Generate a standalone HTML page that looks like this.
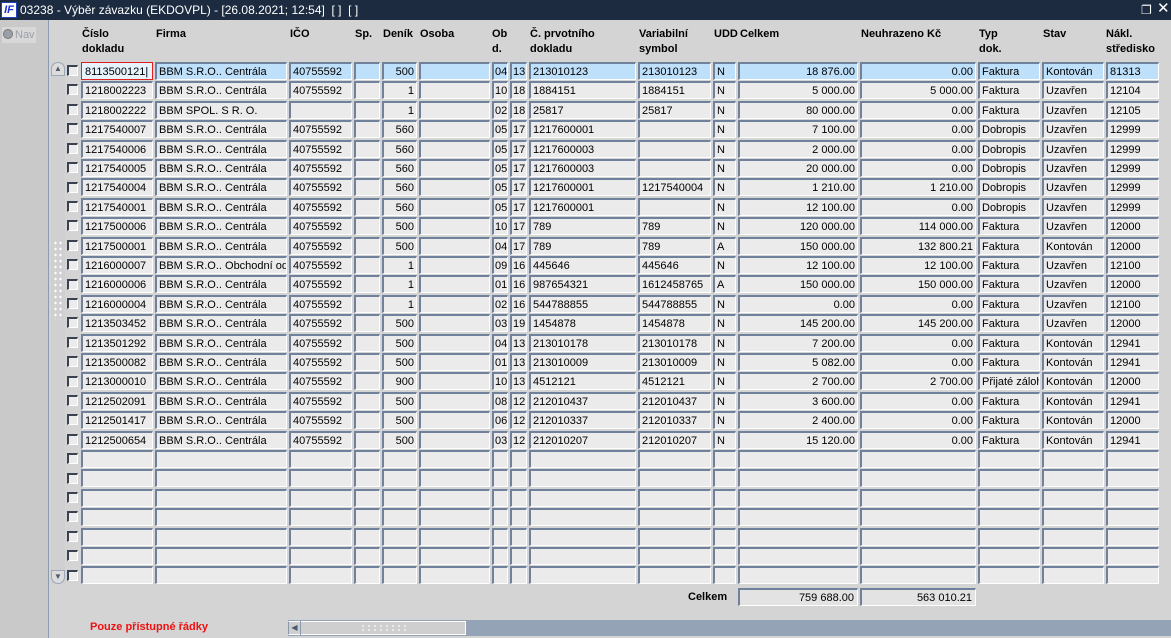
<!DOCTYPE html>
<html><head><meta charset="utf-8"><style>
*{margin:0;padding:0;box-sizing:border-box}
body{width:1171px;height:638px;overflow:hidden;background:#d4d4d4;font-family:"Liberation Sans",Arial,sans-serif;font-size:11px;color:#000;position:relative}
#tb{position:absolute;left:0;top:0;width:1171px;height:20px;background:#1c2b40;color:#fff;font-size:12px;line-height:20px}
#logo{position:absolute;left:1px;top:2px;width:16px;height:16px;background:#fff;border:1px solid #2040c0;color:#1a2fd0;font-weight:bold;font-style:italic;font-size:11px;line-height:14px;text-align:center}
#left{position:absolute;left:0;top:20px;width:49px;height:618px;background:#c9c9c9;border-right:1px solid #8d9bb0}
.hd{position:absolute;top:27px;font-weight:bold;line-height:15px}
.row{position:absolute;left:81px;display:flex;gap:2px;height:18px}
.row i{display:block;font-style:normal;height:18px;background:#ebebeb;border-top:2px solid #6f819b;border-left:2px solid #6f819b;border-right:1px solid #fff;border-bottom:1px solid #fff;padding:1px 2px 0;line-height:15px;white-space:nowrap;overflow:hidden}
.row i:nth-child(1){width:72px}.row i:nth-child(2){width:132px}.row i:nth-child(3){width:63px}.row i:nth-child(4){width:26px}
.row i:nth-child(5){width:35px;text-align:right}.row i:nth-child(6){width:71px}.row i:nth-child(7){width:16px;padding:1px 1px 0}.row i:nth-child(8){width:17px;padding:1px 1px 0}
.row i:nth-child(9){width:107px}.row i:nth-child(10){width:73px}.row i:nth-child(11){width:23px}.row i:nth-child(12){width:120px;text-align:right}
.row i:nth-child(13){width:116px;text-align:right}.row i:nth-child(14){width:62px}.row i:nth-child(15){width:62px}.row i:nth-child(16){width:53px}
.sel i{background:#bfe0fb}
.cb{position:absolute;left:67px;width:11px;height:11px;background:#ececec;border-top:2px solid #3a4250;border-left:2px solid #3a4250;border-right:1px solid #fff;border-bottom:1px solid #fff}
.ft{position:absolute;top:588px;height:18px;background:#e3e3e3;border-top:2px solid #6f819b;border-left:2px solid #6f819b;border-right:1px solid #fff;border-bottom:1px solid #fff;text-align:right;padding:1px 3px 0 0;line-height:15px}
</style></head><body>
<div id="tb"><div id="logo">IF</div><span style="position:absolute;left:20px">03238 - Výběr závazku (EKDOVPL) - [26.08.2021; 12:54]&nbsp; [ ]&nbsp; [ ]</span>
<span style="position:absolute;left:1141px;top:0;font-size:12px">&#x2750;</span><span style="position:absolute;left:1157px;top:-1px;font-size:15px">✕</span></div>
<div id="left"><div style="position:absolute;left:2px;top:7px;width:34px;height:16px;background:#d8d8d8;color:#9aa0a8;font-size:11px;line-height:16px"><span style="display:inline-block;width:10px;height:10px;border-radius:50%;background:#9aa0a8;border:1px solid #777;margin:0 2px 0 1px;vertical-align:-1px"></span>Nav</div></div>
<div class="hd" style="left:82px">Číslo<br>dokladu</div>
<div class="hd" style="left:156px">Firma</div>
<div class="hd" style="left:290px">IČO</div>
<div class="hd" style="left:355px">Sp.</div>
<div class="hd" style="left:383px">Deník</div>
<div class="hd" style="left:420px">Osoba</div>
<div class="hd" style="left:492px">Ob<br>d.</div>
<div class="hd" style="left:530px">Č. prvotního<br>dokladu</div>
<div class="hd" style="left:639px">Variabilní<br>symbol</div>
<div class="hd" style="left:714px">UDD</div>
<div class="hd" style="left:740px">Celkem</div>
<div class="hd" style="left:861px">Neuhrazeno Kč</div>
<div class="hd" style="left:979px">Typ<br>dok.</div>
<div class="hd" style="left:1043px">Stav</div>
<div class="hd" style="left:1106px;white-space:nowrap">Nákl.<br>středisko</div>
<div style="position:absolute;left:51px;top:62px;width:14px;height:522px;background:#d0d0d0"></div>
<div style="position:absolute;left:51px;top:62px;width:14px;height:14px;border:1px solid #9aa8ba;border-radius:7px 7px 0 0;background:#dcdcdc;text-align:center;font-size:8px;line-height:12px;color:#4a5a70">▲</div>
<div style="position:absolute;left:51px;top:570px;width:14px;height:14px;border:1px solid #9aa8ba;border-radius:0 0 7px 7px;background:#dcdcdc;text-align:center;font-size:8px;line-height:12px;color:#4a5a70">▼</div>
<div style="position:absolute;left:53px;top:240px;width:10px;height:80px;background-image:radial-gradient(#fff 1px,transparent 1.2px);background-size:5px 6px"></div>
<div class="cb" style="top:65px"></div><div class="cb" style="top:84px"></div><div class="cb" style="top:104px"></div><div class="cb" style="top:123px"></div><div class="cb" style="top:143px"></div><div class="cb" style="top:162px"></div><div class="cb" style="top:182px"></div><div class="cb" style="top:201px"></div><div class="cb" style="top:220px"></div><div class="cb" style="top:240px"></div><div class="cb" style="top:259px"></div><div class="cb" style="top:279px"></div><div class="cb" style="top:298px"></div><div class="cb" style="top:317px"></div><div class="cb" style="top:337px"></div><div class="cb" style="top:356px"></div><div class="cb" style="top:376px"></div><div class="cb" style="top:395px"></div><div class="cb" style="top:414px"></div><div class="cb" style="top:434px"></div><div class="cb" style="top:453px"></div><div class="cb" style="top:473px"></div><div class="cb" style="top:492px"></div><div class="cb" style="top:511px"></div><div class="cb" style="top:531px"></div><div class="cb" style="top:550px"></div><div class="cb" style="top:570px"></div>
<div class="row sel" style="top:62px"><i style="background:#e6f2fc;border:1px solid #e02020;padding:2px 3px 0">8113500121|</i><i>BBM S.R.O.. Centrála</i><i>40755592</i><i></i><i>500</i><i></i><i>04</i><i>13</i><i>213010123</i><i>213010123</i><i>N</i><i>18 876.00</i><i>0.00</i><i>Faktura</i><i>Kontován</i><i>81313</i></div>
<div class="row" style="top:81.4px"><i>1218002223</i><i>BBM S.R.O.. Centrála</i><i>40755592</i><i></i><i>1</i><i></i><i>10</i><i>18</i><i>1884151</i><i>1884151</i><i>N</i><i>5 000.00</i><i>5 000.00</i><i>Faktura</i><i>Uzavřen</i><i>12104</i></div>
<div class="row" style="top:100.8px"><i>1218002222</i><i>BBM SPOL. S R. O.</i><i></i><i></i><i>1</i><i></i><i>02</i><i>18</i><i>25817</i><i>25817</i><i>N</i><i>80 000.00</i><i>0.00</i><i>Faktura</i><i>Uzavřen</i><i>12105</i></div>
<div class="row" style="top:120.2px"><i>1217540007</i><i>BBM S.R.O.. Centrála</i><i>40755592</i><i></i><i>560</i><i></i><i>05</i><i>17</i><i>1217600001</i><i></i><i>N</i><i>7 100.00</i><i>0.00</i><i>Dobropis</i><i>Uzavřen</i><i>12999</i></div>
<div class="row" style="top:139.6px"><i>1217540006</i><i>BBM S.R.O.. Centrála</i><i>40755592</i><i></i><i>560</i><i></i><i>05</i><i>17</i><i>1217600003</i><i></i><i>N</i><i>2 000.00</i><i>0.00</i><i>Dobropis</i><i>Uzavřen</i><i>12999</i></div>
<div class="row" style="top:159px"><i>1217540005</i><i>BBM S.R.O.. Centrála</i><i>40755592</i><i></i><i>560</i><i></i><i>05</i><i>17</i><i>1217600003</i><i></i><i>N</i><i>20 000.00</i><i>0.00</i><i>Dobropis</i><i>Uzavřen</i><i>12999</i></div>
<div class="row" style="top:178.4px"><i>1217540004</i><i>BBM S.R.O.. Centrála</i><i>40755592</i><i></i><i>560</i><i></i><i>05</i><i>17</i><i>1217600001</i><i>1217540004</i><i>N</i><i>1 210.00</i><i>1 210.00</i><i>Dobropis</i><i>Uzavřen</i><i>12999</i></div>
<div class="row" style="top:197.8px"><i>1217540001</i><i>BBM S.R.O.. Centrála</i><i>40755592</i><i></i><i>560</i><i></i><i>05</i><i>17</i><i>1217600001</i><i></i><i>N</i><i>12 100.00</i><i>0.00</i><i>Dobropis</i><i>Uzavřen</i><i>12999</i></div>
<div class="row" style="top:217.2px"><i>1217500006</i><i>BBM S.R.O.. Centrála</i><i>40755592</i><i></i><i>500</i><i></i><i>10</i><i>17</i><i>789</i><i>789</i><i>N</i><i>120 000.00</i><i>114 000.00</i><i>Faktura</i><i>Uzavřen</i><i>12000</i></div>
<div class="row" style="top:236.6px"><i>1217500001</i><i>BBM S.R.O.. Centrála</i><i>40755592</i><i></i><i>500</i><i></i><i>04</i><i>17</i><i>789</i><i>789</i><i>A</i><i>150 000.00</i><i>132 800.21</i><i>Faktura</i><i>Kontován</i><i>12000</i></div>
<div class="row" style="top:256px"><i>1216000007</i><i>BBM S.R.O.. Obchodní oddělení</i><i>40755592</i><i></i><i>1</i><i></i><i>09</i><i>16</i><i>445646</i><i>445646</i><i>N</i><i>12 100.00</i><i>12 100.00</i><i>Faktura</i><i>Uzavřen</i><i>12100</i></div>
<div class="row" style="top:275.4px"><i>1216000006</i><i>BBM S.R.O.. Centrála</i><i>40755592</i><i></i><i>1</i><i></i><i>01</i><i>16</i><i>987654321</i><i>1612458765</i><i>A</i><i>150 000.00</i><i>150 000.00</i><i>Faktura</i><i>Uzavřen</i><i>12000</i></div>
<div class="row" style="top:294.8px"><i>1216000004</i><i>BBM S.R.O.. Centrála</i><i>40755592</i><i></i><i>1</i><i></i><i>02</i><i>16</i><i>544788855</i><i>544788855</i><i>N</i><i>0.00</i><i>0.00</i><i>Faktura</i><i>Uzavřen</i><i>12100</i></div>
<div class="row" style="top:314.2px"><i>1213503452</i><i>BBM S.R.O.. Centrála</i><i>40755592</i><i></i><i>500</i><i></i><i>03</i><i>19</i><i>1454878</i><i>1454878</i><i>N</i><i>145 200.00</i><i>145 200.00</i><i>Faktura</i><i>Uzavřen</i><i>12000</i></div>
<div class="row" style="top:333.6px"><i>1213501292</i><i>BBM S.R.O.. Centrála</i><i>40755592</i><i></i><i>500</i><i></i><i>04</i><i>13</i><i>213010178</i><i>213010178</i><i>N</i><i>7 200.00</i><i>0.00</i><i>Faktura</i><i>Kontován</i><i>12941</i></div>
<div class="row" style="top:353px"><i>1213500082</i><i>BBM S.R.O.. Centrála</i><i>40755592</i><i></i><i>500</i><i></i><i>01</i><i>13</i><i>213010009</i><i>213010009</i><i>N</i><i>5 082.00</i><i>0.00</i><i>Faktura</i><i>Kontován</i><i>12941</i></div>
<div class="row" style="top:372.4px"><i>1213000010</i><i>BBM S.R.O.. Centrála</i><i>40755592</i><i></i><i>900</i><i></i><i>10</i><i>13</i><i>4512121</i><i>4512121</i><i>N</i><i>2 700.00</i><i>2 700.00</i><i>Přijaté zálohy</i><i>Kontován</i><i>12000</i></div>
<div class="row" style="top:391.8px"><i>1212502091</i><i>BBM S.R.O.. Centrála</i><i>40755592</i><i></i><i>500</i><i></i><i>08</i><i>12</i><i>212010437</i><i>212010437</i><i>N</i><i>3 600.00</i><i>0.00</i><i>Faktura</i><i>Kontován</i><i>12941</i></div>
<div class="row" style="top:411.2px"><i>1212501417</i><i>BBM S.R.O.. Centrála</i><i>40755592</i><i></i><i>500</i><i></i><i>06</i><i>12</i><i>212010337</i><i>212010337</i><i>N</i><i>2 400.00</i><i>0.00</i><i>Faktura</i><i>Kontován</i><i>12000</i></div>
<div class="row" style="top:430.6px"><i>1212500654</i><i>BBM S.R.O.. Centrála</i><i>40755592</i><i></i><i>500</i><i></i><i>03</i><i>12</i><i>212010207</i><i>212010207</i><i>N</i><i>15 120.00</i><i>0.00</i><i>Faktura</i><i>Kontován</i><i>12941</i></div>
<div class="row" style="top:450px"><i></i><i></i><i></i><i></i><i></i><i></i><i></i><i></i><i></i><i></i><i></i><i></i><i></i><i></i><i></i><i></i></div>
<div class="row" style="top:469.4px"><i></i><i></i><i></i><i></i><i></i><i></i><i></i><i></i><i></i><i></i><i></i><i></i><i></i><i></i><i></i><i></i></div>
<div class="row" style="top:488.8px"><i></i><i></i><i></i><i></i><i></i><i></i><i></i><i></i><i></i><i></i><i></i><i></i><i></i><i></i><i></i><i></i></div>
<div class="row" style="top:508.2px"><i></i><i></i><i></i><i></i><i></i><i></i><i></i><i></i><i></i><i></i><i></i><i></i><i></i><i></i><i></i><i></i></div>
<div class="row" style="top:527.6px"><i></i><i></i><i></i><i></i><i></i><i></i><i></i><i></i><i></i><i></i><i></i><i></i><i></i><i></i><i></i><i></i></div>
<div class="row" style="top:547px"><i></i><i></i><i></i><i></i><i></i><i></i><i></i><i></i><i></i><i></i><i></i><i></i><i></i><i></i><i></i><i></i></div>
<div class="row" style="top:566.4px"><i></i><i></i><i></i><i></i><i></i><i></i><i></i><i></i><i></i><i></i><i></i><i></i><i></i><i></i><i></i><i></i></div>
<div style="position:absolute;left:688px;top:591px;font-weight:bold">Celkem</div>
<div class="ft" style="left:738px;width:120px">759 688.00</div>
<div class="ft" style="left:860px;width:116px">563 010.21</div>
<div style="position:absolute;left:90px;top:621px;color:#f01010;font-weight:bold;font-size:11px">Pouze přístupné řádky</div>
<div style="position:absolute;left:288px;top:620px;width:883px;height:16px;background:#94a3b5"></div>
<div style="position:absolute;left:288px;top:621px;width:178px;height:14px;background:#cfcfcf;border:1px solid #fff;border-left:1px solid #8a98ac"></div>
<div style="position:absolute;left:289px;top:621px;width:12px;height:14px;border-right:1px solid #8a98ac;font-size:8px;line-height:14px;text-align:center;color:#4a5a70">◀</div>
<div style="position:absolute;left:360px;top:624px;width:50px;height:8px;background-image:radial-gradient(#fff 1px,transparent 1.2px);background-size:6px 4px"></div>
</body></html>
